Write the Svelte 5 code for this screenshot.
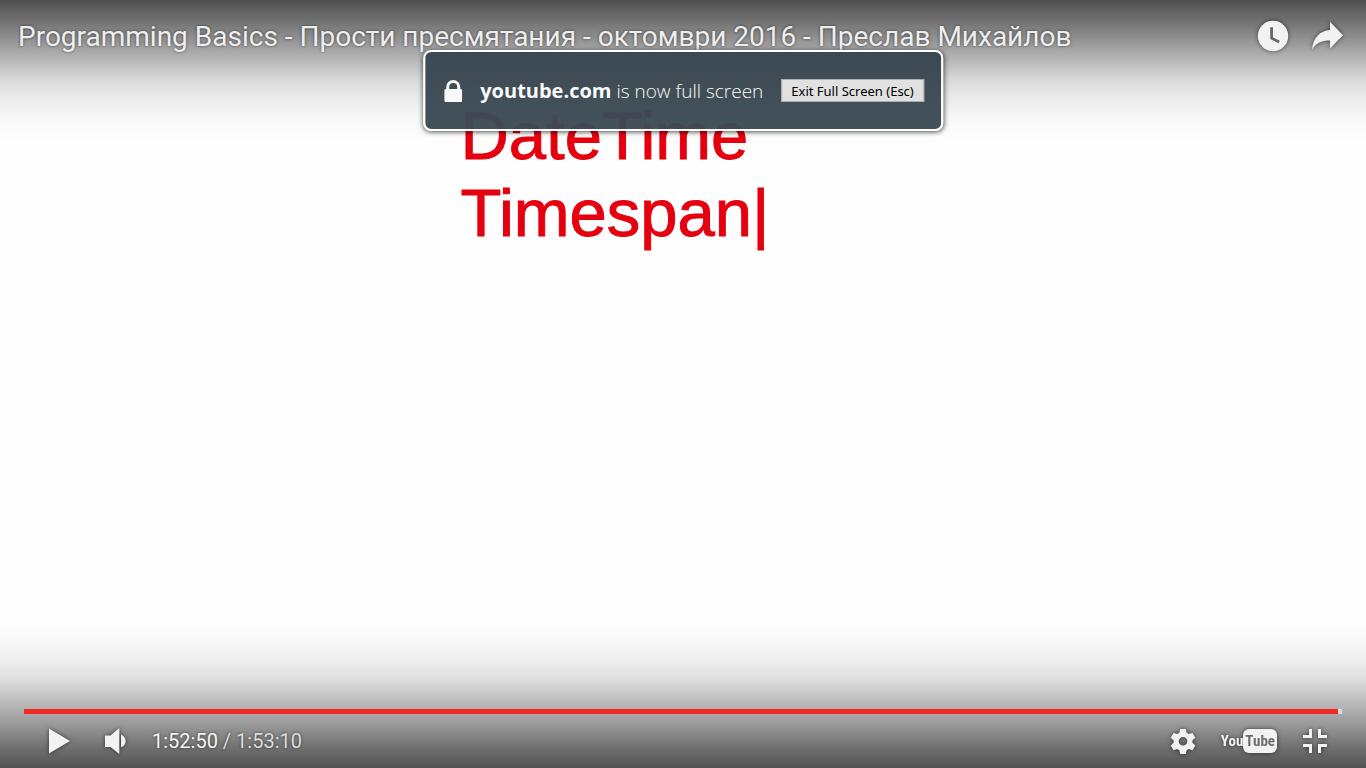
<script>
  const title = 'Programming Basics - Прости пресмятания - октомври 2016 - Преслав Михайлов';
  const lines = ['DateTime', 'Timespan|'];
  const toSeconds = (t) => t.split(':').reduce((sum, part) => sum * 60 + Number(part), 0);
  const current = '1:52:50';
  const duration = '1:53:10';
  const played = (toSeconds(current) / toSeconds(duration)) * 100;
</script>

<main class="player">
  <section class="video" aria-label="Video">
    {#each lines as line}
      <p>{line}</p>
    {/each}
  </section>

  <div class="chrome">
    <header>
      <h1>{title}</h1>
      <button class="icon" aria-label="Watch later">
        <svg width="36" height="36" viewBox="0 0 36 36">
          <circle cx="18" cy="18" r="15.2" />
          <path d="M16.6 9.2v11l7.6 3.8" fill="none" stroke="#686868" stroke-width="2.8" />
        </svg>
      </button>
      <button class="icon" aria-label="Share">
        <svg width="36" height="36" viewBox="0 0 36 36">
          <path d="M21 3.8 34 17.3 21 30.5V22.5C12.500 22.500 7 25 3 31.500 4 20 11 12.500 21 12Z" />
        </svg>
      </button>
    </header>

    <footer>
      <div class="track" role="progressbar" aria-label="Playback position" aria-valuenow={Math.round(played)}>
        <div class="played" style:width="{played}%"></div>
      </div>
      <div class="controls">
        <button class="icon" aria-label="Play">
          <svg width="36" height="36" viewBox="0 0 36 36"><path d="M9 5.500 30 18 9 30.500Z" /></svg>
        </button>
        <button class="icon" aria-label="Mute">
          <svg width="36" height="36" viewBox="0 0 36 36">
            <path d="M9 12.500h5.500L23.300 5v26L14.500 24H9ZM25 11.700C31.200 13.500 31.200 22.500 25 24.300Z" />
          </svg>
        </button>
        <span class="time"><span>{current}</span> / {duration}</span>
        <button class="icon" aria-label="Settings">
          <svg width="36" height="36" viewBox="0 0 36 36">
            <path
              fill-rule="evenodd"
              d="M15.200 6h5.600l.8 3.800 2.200 1.300 3.700-1.200 2.800 4.800-2.900 2.600v2.500l2.900 2.600-2.800 4.800-3.700-1.200-2.200 1.300-.8 3.700h-5.600l-.8-3.700-2.200-1.300-3.700 1.200-2.800-4.800 2.900-2.600v-2.500l-2.900-2.600 2.800-4.800 3.700 1.200 2.200-1.300ZM18 14a4.300 4.300 0 1 0 0 8.600 4.300 4.300 0 1 0 0-8.600Z"
            />
          </svg>
        </button>
        <a class="brand" href="#youtube" aria-label="YouTube"><span>You</span><span class="tube">Tube</span></a>
        <button class="icon" aria-label="Exit full screen">
          <svg width="36" height="36" viewBox="0 0 36 36">
            <path d="M12 6h3v9H6v-3h6ZM21 6h3v6h6v3H21ZM6 21h9v9h-3v-6H6ZM21 21h9v3h-6v6h-3Z" />
          </svg>
        </button>
      </div>
    </footer>
  </div>

  <aside class="notice">
    <svg width="18" height="22" viewBox="0 0 18 22" aria-hidden="true">
      <path
        fill-rule="evenodd"
        d="M2 9V7a7 7 0 0 1 14 0v2h.5a1.500 1.500 0 0 1 1.500 1.500v10a1.500 1.500 0 0 1-1.500 1.500h-15A1.500 1.500 0 0 1 0 20.500v-10A1.500 1.500 0 0 1 1.500 9ZM5 9h8V7a4 4 0 0 0-8 0Z"
      />
    </svg>
    <p><strong>youtube.com</strong> is now full screen</p>
    <button class="exit">Exit Full Screen (Esc)</button>
  </aside>
</main>

<style>
  :global(body) {
    margin: 0;
  }
  .player {
    position: relative;
    display: grid;
    min-height: 100vh;
    background: #fefefe;
    overflow: hidden;
  }
  .video,
  .chrome {
    grid-area: 1 / 1;
  }
  .video {
    padding: 97px 0 0 34%;
    box-sizing: border-box;
    font: 67px/77px 'Liberation Sans', Arial, sans-serif;
    color: #e5000f;
    -webkit-text-stroke: 1px #e5000f;
  }
  .video p {
    margin: 0 0 0 -4px;
  }
  .chrome {
    display: flex;
    flex-direction: column;
    justify-content: space-between;
    min-width: 0;
    font-family: Roboto, sans-serif;
    color: #eee;
  }
  header {
    display: flex;
    align-items: flex-start;
    gap: 18px;
    height: 150px;
    padding: 18px 21px 0 18px;
    box-sizing: border-box;
    background: linear-gradient(
      rgba(0, 0, 0, 0.69) 0,
      rgba(0, 0, 0, 0.56) 20px,
      rgba(0, 0, 0, 0.42) 40px,
      rgba(0, 0, 0, 0.28) 60px,
      rgba(0, 0, 0, 0.15) 80px,
      rgba(0, 0, 0, 0.07) 100px,
      rgba(0, 0, 0, 0.02) 120px,
      transparent 145px
    );
  }
  h1 {
    flex: 1;
    min-width: 0;
    margin: 0;
    font-size: 28px;
    line-height: 38px;
    font-weight: 400;
    white-space: nowrap;
    overflow: hidden;
    text-overflow: ellipsis;
    text-shadow: 0 0 3px rgba(0, 0, 0, 0.6);
  }
  button {
    margin: 0;
    border: 0;
    padding: 0;
    cursor: pointer;
  }
  .icon {
    display: block;
    flex: none;
    width: 36px;
    height: 36px;
    background: none;
  }
  .icon svg {
    display: block;
    fill: #f2f2f2;
    filter: drop-shadow(0 0 2px rgba(0, 0, 0, 0.6));
  }
  footer {
    padding: 89px 24px 9px;
    background: linear-gradient(
      to top,
      rgba(0, 0, 0, 0.68) 0,
      rgba(0, 0, 0, 0.56) 20px,
      rgba(0, 0, 0, 0.39) 45px,
      rgba(0, 0, 0, 0.25) 68px,
      rgba(0, 0, 0, 0.13) 88px,
      rgba(0, 0, 0, 0.06) 108px,
      rgba(0, 0, 0, 0.02) 128px,
      transparent 148px
    );
  }
  .track {
    height: 5px;
    background: #ddd;
  }
  .played {
    height: 100%;
    background: #f12b24;
  }
  .controls {
    display: flex;
    align-items: center;
    gap: 20px;
    padding: 9px 9px 0 16px;
  }
  .time {
    flex: 1;
    font-size: 20px;
    line-height: 36px;
    color: #ddd;
    text-shadow: 0 0 3px rgba(0, 0, 0, 0.6);
  }
  .time span {
    color: #f5f5f5;
  }
  .brand {
    display: flex;
    align-items: center;
    font: 700 15px/22px 'Liberation Sans Narrow', 'Roboto Condensed', 'Open Sans Condensed', Roboto, sans-serif;
    color: #f2f2f2;
    text-decoration: none;
    filter: drop-shadow(0 0 2px rgba(0, 0, 0, 0.6));
  }
  .tube {
    padding: 1px 2px;
    border-radius: 6px;
    background: #f2f2f2;
    color: #6d6d6d;
  }
  .notice {
    position: absolute;
    top: 50px;
    left: 50%;
    transform: translateX(-50%);
    display: flex;
    align-items: center;
    gap: 18px;
    height: 81px;
    padding: 0 17px 0 19px;
    box-sizing: border-box;
    border: 2px solid #fff;
    border-radius: 8px;
    background: linear-gradient(rgba(57, 70, 79, 0.97), rgba(60, 75, 84, 0.96));
    box-shadow: 0 1px 5px rgba(0, 0, 0, 0.7);
    color: #fafafa;
    white-space: nowrap;
  }
  .notice svg {
    fill: #fafafa;
  }
  .notice p {
    margin: 0;
    font: 300 19px/30px 'Open Sans', sans-serif;
  }
  .notice strong {
    font-size: 20px;
    font-weight: 700;
  }
  .exit {
    height: 23px;
    padding: 0 9px;
    border: 1px solid #adadad;
    background: #e1e1e1;
    font: 13px/20px 'Noto Sans', sans-serif;
    color: #000;
  }
</style>
